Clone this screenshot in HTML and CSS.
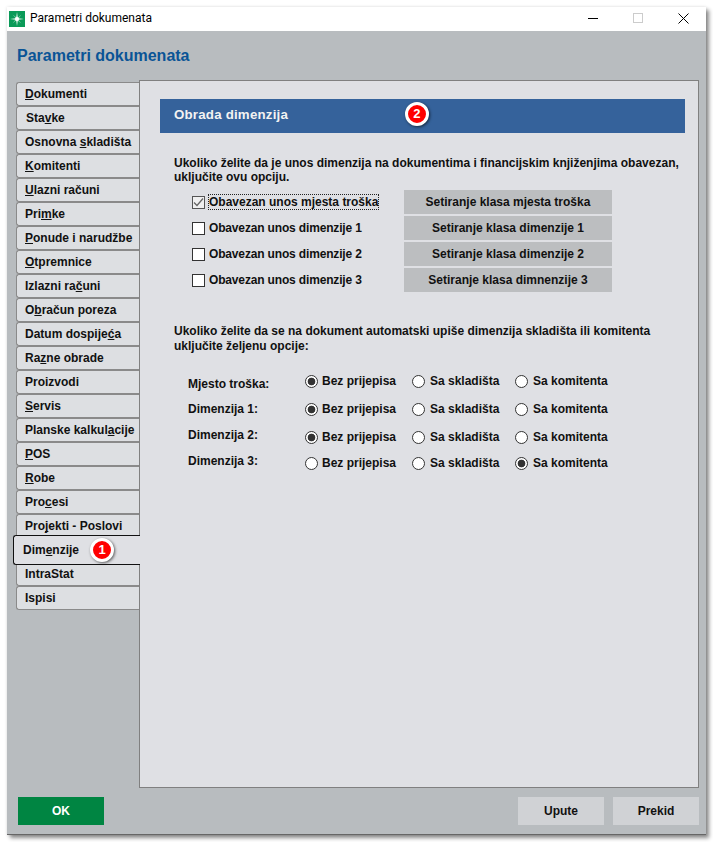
FILE: index.html
```html
<!DOCTYPE html>
<html lang="bs">
<head>
  <meta charset="UTF-8">
  <title>Parametri dokumenata</title>
  <link rel="stylesheet" href="styles.css">
</head>
<body>

<div class="window">
  <div class="titlebar">
    <svg class="app-icon" width="16" height="16" viewBox="0 0 16 16">
      <rect width="16" height="16" fill="#0a9a58"/>
      <path d="M8 1 L8.8 7.2 L15 8 L8.8 8.8 L8 15 L7.2 8.8 L1 8 L7.2 7.2 Z" fill="#fff"/>
      <path d="M3.5 3.5 L8.5 7.5 L12.5 3.5 L8.5 8.5 L12.5 12.5 L7.5 8.5 L3.5 12.5 L7.5 7.5 Z" fill="#e6fff0"/>
      <circle cx="8" cy="8" r="2" fill="#fff"/>
    </svg>
    <span class="title-text">Parametri dokumenata</span>
    <div class="win-controls">
      <svg width="10" height="10" viewBox="0 0 10 10"><path d="M0 5.5H10" stroke="#000" stroke-width="1"/></svg>
      <svg width="10" height="10" viewBox="0 0 10 10"><rect x=".5" y=".5" width="9" height="9" fill="none" stroke="#ccc"/></svg>
      <svg width="11" height="11" viewBox="0 0 11 11"><path d="M.5 .5L10.5 10.5M10.5 .5L.5 10.5" stroke="#000" stroke-width="1"/></svg>
    </div>
  </div>

  <div class="client">
    <h1 class="page-title">Parametri dokumenata</h1>

    <div class="main">
      <div class="tabs">
        <div class="tab"><u>D</u>okumenti</div>
        <div class="tab tab-shift">Sta<u>v</u>ke</div>
        <div class="tab">Osnovna <u>s</u>kladišta</div>
        <div class="tab"><u>K</u>omitenti</div>
        <div class="tab"><u>U</u>lazni računi</div>
        <div class="tab">Pri<u>m</u>ke</div>
        <div class="tab"><u>P</u>onude i narudžbe</div>
        <div class="tab"><u>O</u>tpremnice</div>
        <div class="tab">Izlazni ra<u>č</u>uni</div>
        <div class="tab">O<u>b</u>račun poreza</div>
        <div class="tab">Datum dospije<u>ć</u>a</div>
        <div class="tab">Ra<u>z</u>ne obrade</div>
        <div class="tab">Proizvodi</div>
        <div class="tab"><u>S</u>ervis</div>
        <div class="tab">Planske kalkul<u>a</u>cije</div>
        <div class="tab"><u>P</u>OS</div>
        <div class="tab"><u>R</u>obe</div>
        <div class="tab">Pro<u>c</u>esi</div>
        <div class="tab">Pro<u>j</u>ekti - Poslovi</div>
        <div class="tab tab-active">Dim<u>e</u>nzije<span class="badge badge-tab">1</span></div>
        <div class="tab">IntraStat</div>
        <div class="tab">Ispisi</div>
      </div>

      <div class="panel">
        <div class="panel-head">Obrada dimenzija<span class="badge badge-head">2</span></div>

        <p class="intro intro-first">Ukoliko želite da je unos dimenzija na dokumentima i financijskim knjiženjima obavezan, uključite ovu opciju.</p>

        <div class="checks">
          <div class="check-row">
            <span class="checkbox checkbox-on">
              <svg width="11" height="11" viewBox="0 0 11 11"><path d="M1 5.5L4 8.5L10 1.5" fill="none" stroke="#666" stroke-width="1.3"/></svg>
            </span>
            <span class="check-label"><span class="focus-ring">Obavezan unos mjesta troška</span></span>
            <button class="set-btn">Setiranje klasa mjesta troška</button>
          </div>
          <div class="check-row">
            <span class="checkbox"></span>
            <span class="check-label check-tight">Obavezan unos dimenzije 1</span>
            <button class="set-btn">Setiranje klasa dimenzije 1</button>
          </div>
          <div class="check-row">
            <span class="checkbox"></span>
            <span class="check-label check-tight">Obavezan unos dimenzije 2</span>
            <button class="set-btn">Setiranje klasa dimenzije 2</button>
          </div>
          <div class="check-row">
            <span class="checkbox"></span>
            <span class="check-label check-tight">Obavezan unos dimenzije 3</span>
            <button class="set-btn">Setiranje klasa dimnenzije 3</button>
          </div>
        </div>

        <p class="intro intro-second">Ukoliko želite da se na dokument automatski upiše dimenzija skladišta ili komitenta uključite željenu opcije:</p>

        <div class="radios">
          <div class="radio-label label-low">Mjesto troška:</div>
          <div class="radio-opt"><span class="radio on"></span>Bez prijepisa</div>
          <div class="radio-opt opt-wide"><span class="radio"></span>Sa skladišta</div>
          <div class="radio-opt opt-wide"><span class="radio"></span>Sa komitenta</div>

          <div class="radio-label">Dimenzija 1:</div>
          <div class="radio-opt"><span class="radio on"></span>Bez prijepisa</div>
          <div class="radio-opt opt-wide"><span class="radio"></span>Sa skladišta</div>
          <div class="radio-opt opt-wide"><span class="radio"></span>Sa komitenta</div>

          <div class="radio-label label-high">Dimenzija 2:</div>
          <div class="radio-opt"><span class="radio on"></span>Bez prijepisa</div>
          <div class="radio-opt opt-wide"><span class="radio"></span>Sa skladišta</div>
          <div class="radio-opt opt-wide"><span class="radio"></span>Sa komitenta</div>

          <div class="radio-label label-high">Dimenzija 3:</div>
          <div class="radio-opt"><span class="radio"></span>Bez prijepisa</div>
          <div class="radio-opt opt-wide"><span class="radio"></span>Sa skladišta</div>
          <div class="radio-opt opt-wide"><span class="radio on"></span>Sa komitenta</div>
        </div>
      </div>
    </div>

    <div class="footer">
      <button class="btn btn-ok">OK</button>
      <div class="footer-right">
        <button class="btn">Upute</button>
        <button class="btn">Prekid</button>
      </div>
    </div>
  </div>
</div>

</body>
</html>
```
FILE: styles.css
```css
* { box-sizing: border-box; }
body {
  margin: 0;
  background: #fff;
  font-family: "Liberation Sans", Arial, sans-serif;
  font-size: 12px;
  font-weight: bold;
  color: #111;
}
u { text-decoration-skip-ink: none; }
.window {
  width: 699px;
  height: 828px;
  margin: 7px;
  display: flex;
  flex-direction: column;
  background: #b8bcbf;
  border-bottom: 1px solid #666;
  box-shadow: 3px 3px 4px rgba(0,0,0,0.45), 0 0 3px rgba(0,0,0,0.12);
}
.titlebar {
  height: 24px;
  flex: none;
  display: flex;
  align-items: center;
  background: #fff;
  padding-left: 2px;
}
.app-icon { flex: none; }
.title-text {
  margin-left: 5px;
  padding-bottom: 2px;
  font-family: Roboto, sans-serif;
  font-weight: normal;
  font-size: 12px;
  color: #000;
}
.win-controls {
  margin-left: auto;
  display: flex;
  align-items: center;
  gap: 35px;
  padding: 0 17px 2px 0;
}
.client {
  flex: 1;
  display: flex;
  flex-direction: column;
  min-height: 0;
}
.page-title {
  height: 49px;
  flex: none;
  margin: 0;
  padding: 15px 0 0 10px;
  font-size: 16px;
  line-height: 20px;
  color: #0a5496;
}
.main {
  display: flex;
  height: 708px;
  flex: none;
  padding-left: 9px;
}
.tabs {
  width: 123px;
  flex: none;
  padding-top: 2px;
  display: flex;
  flex-direction: column;
}
.tab {
  height: 24px;
  flex: none;
  padding-left: 8px;
  line-height: 22px;
  background: #dddfe2;
  border: 1px solid #8a8a8a;
  border-right: none;
  border-radius: 3px 0 0 3px;
  white-space: nowrap;
}
.tab-shift { padding-left: 9px; }
.tab-active {
  position: relative;
  z-index: 1;
  height: 30px;
  margin: -3px -1px -3px -3px;
  padding-left: 9px;
  line-height: 28px;
  background: #dfe0e4;
  border-color: #111;
}
.panel {
  width: 560px;
  flex: none;
  background: #dfe0e4;
  border: 1px solid #808080;
  padding: 18px 13px 0 20px;
}
.panel-head {
  position: relative;
  height: 34px;
  padding-left: 14px;
  line-height: 31px;
  background: #35629b;
  color: #f2f2f2;
  font-size: 13.3px;
  letter-spacing: 0.2px;
}
.badge {
  position: absolute;
  width: 24px;
  height: 24px;
  border-radius: 50%;
  background: #f00;
  border: 3px solid #fff;
  box-shadow: 1px 1px 3px rgba(0,0,0,0.6);
  color: #fff;
  font-size: 13px;
  line-height: 18px;
  text-align: center;
}
.badge-tab { left: 76px; top: 2px; }
.badge-head { left: 245px; top: 3px; }
.intro {
  margin: 0;
  padding-left: 14px;
  line-height: 14px;
}
.intro-first { margin-top: 23px; }
.intro-second { margin-top: 31px; width: 510px; line-height: 15px; }
.checks {
  margin-top: 5px;
}
.check-row {
  height: 26px;
  display: flex;
  align-items: center;
  padding-left: 32px;
}
.checkbox {
  width: 13px;
  height: 13px;
  flex: none;
  background: #fff;
  border: 1px solid #333;
  display: flex;
  align-items: center;
  justify-content: center;
}
.checkbox-on { background: #f0f0f0; border-color: #555; }
.check-label {
  width: 195px;
  flex: none;
  margin-left: 4px;
  white-space: nowrap;
}
.check-tight { letter-spacing: -0.16px; }
.focus-ring { outline: 1px dotted #222; }
.set-btn {
  width: 208px;
  height: 24px;
  flex: none;
  border: none;
  padding: 0;
  background: #bcbec0;
  color: #111;
  font: inherit;
}
.radios {
  margin-top: 13px;
  margin-left: 28px;
  display: grid;
  grid-template-columns: 117px 107px 103px 110px;
  grid-template-rows: 28px 28px 28px 24px;
}
.radio-label { align-self: center; }
.label-low { padding-top: 6px; }
.label-high { padding-bottom: 4px; }
.radio-opt {
  display: flex;
  align-items: center;
  gap: 4px;
}
.opt-wide { gap: 5px; }
.radio {
  width: 13px;
  height: 13px;
  flex: none;
  border-radius: 50%;
  background: #fff;
  border: 1px solid #333;
}
.radio.on {
  background: radial-gradient(circle, #333 0, #333 3.5px, #fff 4.2px);
}
.footer {
  display: flex;
  justify-content: space-between;
  padding: 9px 7px 0 11px;
}
.footer-right {
  display: flex;
  gap: 9px;
}
.btn {
  width: 86px;
  height: 28px;
  border: none;
  padding: 0;
  background: #d0d2d5;
  color: #111;
  font: inherit;
}
.btn-ok {
  background: #008542;
  color: #fff;
}
```
